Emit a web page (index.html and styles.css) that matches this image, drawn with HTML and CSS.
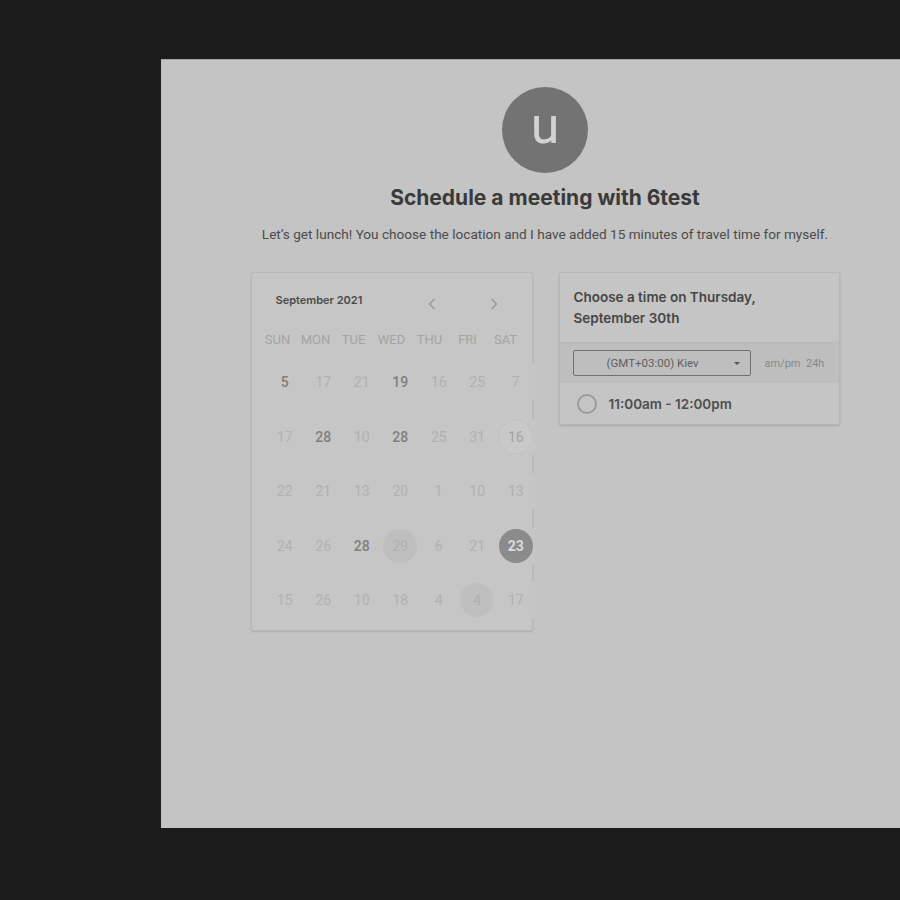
FILE: index.html
```html
<!DOCTYPE html>
<html>
<head>
<meta charset="utf-8">
<link rel="stylesheet" href="styles.css">
</head>
<body>
<div class="modal">
  <div class="avatar">u</div>
  <h1 class="title">Schedule a meeting with 6test</h1>
  <p class="subtitle">Let’s get lunch! You choose the location and I have added 15 minutes of travel time for myself.</p>
  <div class="cards">
    <div class="calendar">
      <div class="cal-head">
        <span class="month">September 2021</span>
        <div class="nav">
          <span class="nav-btn"><svg width="8" height="12" viewBox="0 0 8 12"><path d="M6.5 1 L1.5 6 L6.5 11" fill="none" stroke="#9a9a9a" stroke-width="1.5"/></svg></span>
          <span class="nav-btn"><svg width="8" height="12" viewBox="0 0 8 12"><path d="M1.5 1 L6.5 6 L1.5 11" fill="none" stroke="#9a9a9a" stroke-width="1.5"/></svg></span>
        </div>
      </div>
      <div class="weekdays">
        <span>SUN</span><span>MON</span><span>TUE</span><span>WED</span><span>THU</span><span>FRI</span><span>SAT</span>
      </div>
      <div class="days">
        <span class="day strong">5</span><span class="day">17</span><span class="day">21</span><span class="day strong">19</span><span class="day">16</span><span class="day">25</span><span class="day">7</span>
        <span class="day">17</span><span class="day strong">28</span><span class="day">10</span><span class="day strong">28</span><span class="day">25</span><span class="day">31</span><span class="day"><i class="ring">16</i></span>
        <span class="day">22</span><span class="day">21</span><span class="day">13</span><span class="day">20</span><span class="day">1</span><span class="day">10</span><span class="day">13</span>
        <span class="day">24</span><span class="day">26</span><span class="day strong">28</span><span class="day"><i class="soft">29</i></span><span class="day">6</span><span class="day">21</span><span class="day"><i class="sel">23</i></span>
        <span class="day">15</span><span class="day">26</span><span class="day">10</span><span class="day">18</span><span class="day">4</span><span class="day"><i class="soft">4</i></span><span class="day">17</span>
      </div>
    </div>
    <div class="times">
      <div class="times-head">Choose a time on Thursday,<br>September 30th</div>
      <div class="tz-row">
        <div class="select"><span class="select-text">(GMT+03:00) Kiev</span><span class="caret"></span></div>
        <span class="fmt">am/pm&nbsp; 24h</span>
      </div>
      <div class="slot">
        <span class="radio"></span>
        <span class="slot-text">11:00am - 12:00pm</span>
      </div>
    </div>
  </div>
</div>
</body>
</html>
```
FILE: styles.css
```css
html, body {
  margin: 0;
  padding: 0;
}
body {
  background: #1c1c1c;
  overflow: hidden;
  font-family: Roboto, "Liberation Sans", sans-serif;
}
.modal {
  margin: 59px 0 0 161px;
  width: 768px;
  height: 769px;
  background: #c4c4c4;
  border-top: 1px solid #a4a4a4;
  display: flex;
  flex-direction: column;
  align-items: center;
  padding-top: 27px;
  box-sizing: border-box;
}
.avatar {
  width: 86px;
  height: 86px;
  border-radius: 50%;
  background: #737373;
  color: #d2d2d2;
  font-family: Roboto, sans-serif;
  font-size: 52px;
  line-height: 78px;
  text-align: center;
}
.title {
  margin: 13px 0 0;
  font-family: Inter, "Liberation Sans", sans-serif;
  font-weight: 700;
  font-size: 21px;
  line-height: 24px;
  color: #3a3a3a;
}
.subtitle {
  margin: 15px 0 0;
  font-size: 13.6px;
  line-height: 18px;
  color: #4b4b4b;
}
.cards {
  display: flex;
  gap: 26px;
  align-items: flex-start;
  margin-top: 29px;
}
.calendar {
  width: 282px;
  height: 359px;
  box-sizing: border-box;
  border: 1px solid #b6b6b6;
  border-radius: 2px;
  background: #c6c6c6;
  box-shadow: 0 1px 2px rgba(0,0,0,0.12);
  padding: 19px 0 0 7px;
}
.cal-head {
  display: flex;
  align-items: center;
  height: 24px;
  padding-left: 17px;
  padding-right: 26px;
}
.month {
  font-family: Inter, sans-serif;
  font-weight: 600;
  font-size: 11px;
  color: #4a4a4a;
  margin-bottom: 8px;
}
.nav {
  margin-left: auto;
  display: flex;
  gap: 38px;
}
.nav-btn {
  width: 24px;
  height: 24px;
  display: flex;
  align-items: center;
  justify-content: center;
}
.weekdays {
  display: grid;
  grid-template-columns: repeat(7, 38px);
  margin-top: 15px;
  font-size: 13px;
  line-height: 18px;
  color: #a4a4a4;
  text-align: center;
}
.days {
  display: grid;
  grid-template-columns: repeat(7, 38.5px);
  grid-auto-rows: 36px;
  row-gap: 18.5px;
  margin: 15px 0 0 7px;
  font-size: 14px;
  color: #b1b1b1;
}
.day {
  display: flex;
  align-items: center;
  justify-content: center;
  background: #c6c6c6;
}
.day.strong {
  color: #808080;
  font-weight: 500;
}
.day i {
  font-style: normal;
  width: 34px;
  height: 34px;
  border-radius: 50%;
  display: flex;
  align-items: center;
  justify-content: center;
  box-sizing: border-box;
}
.day .ring {
  background: #c9c9c9;
  border: 1px dotted #bbbbbb;
  color: #a2a2a2;
}
.day .soft {
  background: #bfbfbf;
}
.day .sel {
  background: #8b8b8b;
  color: #dadada;
  font-weight: 700;
}
.times {
  width: 281px;
  box-sizing: border-box;
  border: 1px solid #b6b6b6;
  border-radius: 2px;
  background: #c5c5c5;
  box-shadow: 0 1px 2px rgba(0,0,0,0.15);
}
.times-head {
  padding: 14px 14px 13px;
  font-family: Inter, sans-serif;
  font-weight: 600;
  font-size: 13.5px;
  line-height: 21px;
  color: #454545;
  border-bottom: 1px solid #bababa;
}
.tz-row {
  display: flex;
  align-items: center;
  height: 40px;
  padding-left: 13px;
  background: #bebebe;
}
.select {
  width: 178px;
  height: 26px;
  box-sizing: border-box;
  border: 1px solid #6f6f6f;
  border-radius: 2px;
  display: flex;
  align-items: center;
  padding-left: 33px;
  padding-right: 10px;
}
.select-text {
  font-size: 11.5px;
  color: #606060;
}
.caret {
  margin-left: auto;
  width: 0;
  height: 0;
  border-left: 3px solid transparent;
  border-right: 3px solid transparent;
  border-top: 3px solid #555;
}
.fmt {
  margin-left: 14px;
  font-size: 11px;
  color: #888;
}
.slot {
  display: flex;
  align-items: center;
  height: 41px;
  padding-left: 17px;
  background: #c5c5c5;
}
.radio {
  width: 20px;
  height: 20px;
  box-sizing: border-box;
  border: 2px solid #9c9c9c;
  border-radius: 50%;
}
.slot-text {
  margin-left: 12px;
  font-family: Inter, sans-serif;
  font-weight: 600;
  font-size: 13.5px;
  color: #4f4f4f;
}
```
